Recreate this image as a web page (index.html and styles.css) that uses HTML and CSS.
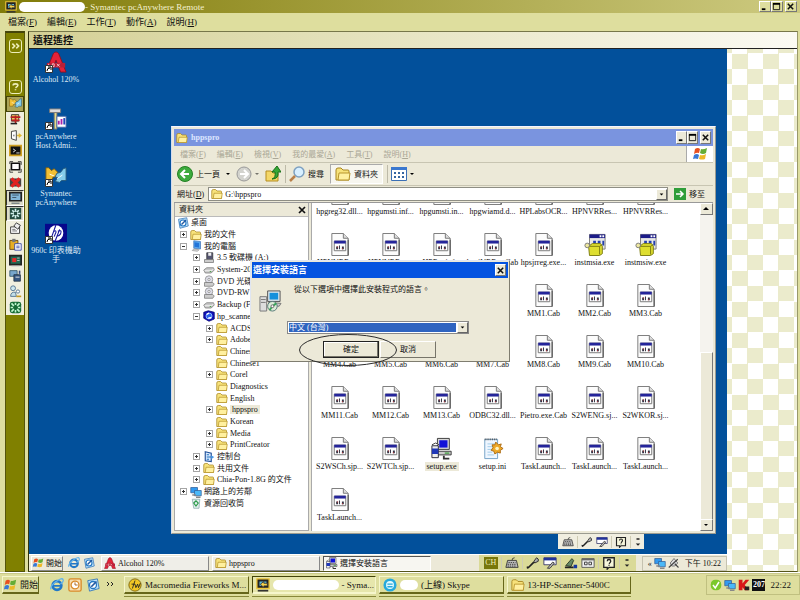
FILE: index.html
```html
<!DOCTYPE html>
<html lang="zh-Hant">
<head>
<meta charset="utf-8">
<title>Symantec pcAnywhere Remote</title>
<link rel="stylesheet" href="styles.css">
</head>
<body>
<svg class="defs" aria-hidden="true">
  <symbol id="folder" viewBox="0 0 16 16"><path d="M1 4q0-2 2-2h3l2 2h5q1 0 1 1v9H1z" fill="#f7e27a" stroke="#a88520"/><path d="M3 14l1-7h11l-1 7z" fill="#fff0a0" stroke="#b8952c"/></symbol>
  <symbol id="file" viewBox="0 0 20 24"><path d="M1.500.5h12l5 5v18h-17z" fill="#fcfcfc" stroke="#777"/><path d="M13.500.5v5h5" fill="#ddd" stroke="#777"/><path d="M18.500 7v16.500" stroke="#444"/><path d="M4 8.500h12v10H4z" fill="#fff" stroke="#777"/><path d="M4 8h12v3H4z" fill="#24249a"/><path d="M6 14h2v3H6zM9 13h1v4H9zM12 14h2v3h-2z" fill="#334"/><path d="M7 14h1v1H7zM12 16h1v1h-1z" fill="#c33"/></symbol>
  <symbol id="msi" viewBox="0 0 24 24"><path d="M6 1h17v16H6z" fill="#e8e8e8" stroke="#777"/><path d="M6 1h17v4H6z" fill="#1c1c88"/><path d="M17 2h2v2h-2zM20 2h2v2h-2z" fill="#fff"/><path d="M10 8h3v3h-3zM15 8h3v3h-3zM20 8h2v5h-2z" fill="#2440b0"/><path d="M5 14l4-3h9l2 3v8l-3 2H6z" fill="#dede30" stroke="#77770c"/><path d="M5 14h12v9" fill="none" stroke="#77770c"/><path d="M17 14l3-2" stroke="#77770c"/><circle cx="3.500" cy="13" r="2.500" fill="#eee8a0" stroke="#777"/></symbol>
  <symbol id="setup" viewBox="0 0 24 24"><path d="M7 1h13v12H7z" fill="#d8d8d8" stroke="#333"/><path d="M9 3h9v8H9z" fill="#1212d8"/><path d="M5 15h17v4H5z" fill="#ccc" stroke="#333"/><path d="M15 17h5" stroke="#080"/><path d="M1 9h7v13H1z" fill="#eee" stroke="#223"/><path d="M1 12h7v6H1z" fill="#2038b8"/><path d="M1 8l4-2 4 2" fill="#fff" stroke="#333"/><path d="M14 20v3h6" fill="none" stroke="#333" stroke-width="2"/></symbol>
  <symbol id="ini" viewBox="0 0 24 24"><path d="M3 2h14v21H3z" fill="#eef6ff" stroke="#6c9cc4"/><path d="M3 2h14" stroke="#555" stroke-width="2" stroke-dasharray="1 1"/><path d="M6 7h8M6 10h7M6 13h5M6 16h5M6 19h7" stroke="#9cc8e8"/><path d="M15 5l3 3 3-1-1 3 3 2-3 2v3l-3-1-3 2-1-3-3-1 2-3-1-3h3z" fill="#eea828" stroke="#a86810"/><circle cx="16.500" cy="12" r="2" fill="#fff4c0"/></symbol>
  <symbol id="ie" viewBox="0 0 16 16"><circle cx="8" cy="8.500" r="5" fill="none" stroke="#2178c8" stroke-width="3"/><path d="M4 9h9" stroke="#2178c8" stroke-width="2"/><path d="M1 13Q0 9 7 4t8-2q1 2-3 5" fill="none" stroke="#65b4ea" stroke-width="1.500"/></symbol>
  <symbol id="desk" viewBox="0 0 16 16"><path d="M2 3l11-2 2 11-11 3z" fill="#bfe2fa" stroke="#3477b8"/><circle cx="8" cy="8" r="4" fill="#fff" stroke="#2277c4" stroke-width="1.500"/><path d="M6 10l6-6" stroke="#2358a0" stroke-width="2"/></symbol>
  <symbol id="flag" viewBox="0 0 16 16"><path d="M3 3q3-2 5 0L7 7Q5 6 2 8z" fill="#e85020"/><path d="M9 3q2 1 6-1l-1 5q-3 2-6 0z" fill="#65ad35"/><path d="M2 9q3-2 5 0l-1 4q-3-1-5 0z" fill="#3978d5"/><path d="M8 9q3 1 6-1l-1 5q-3 1-6 0z" fill="#edb927"/></symbol>
  <symbol id="pc" viewBox="0 0 16 16"><path d="M5 1l9 1v10l-9-1z" fill="#58a8f0" stroke="#4878b8"/><path d="M6 3l6 1v6l-6-1z" fill="#2374d8"/><path d="M5 12l7 1-2 2-7-1z" fill="#ddd" stroke="#999"/></symbol>
  <symbol id="net" viewBox="0 0 16 16"><path d="M1 2h9v7H1z" fill="#329af0" stroke="#356098"/><path d="M6 6h9v7H6z" fill="#4ab8f8" stroke="#356098"/><path d="M3 12h5M8 15h6" stroke="#888" stroke-width="2"/></symbol>
  <symbol id="disk" viewBox="0 0 16 16"><path d="M1 8l4-3h9l1 3-4 4H3z" fill="#c8c8c8" stroke="#777"/><path d="M2 9h9l3-2" fill="none" stroke="#fff"/><path d="M9 10h2" stroke="#292"/></symbol>
  <symbol id="cd" viewBox="0 0 16 16"><circle cx="8" cy="6" r="5" fill="#dedee8" stroke="#888"/><circle cx="8" cy="6" r="1.500" fill="#fff" stroke="#888"/><path d="M2 10h11l2 2-2 3H2z" fill="#ccc" stroke="#777"/></symbol>
  <symbol id="floppy" viewBox="0 0 16 16"><path d="M5 1h8v9H5z" fill="#565670" stroke="#333"/><path d="M7 1h4v4H7z" fill="#eee"/><path d="M2 10h12v4H2z" fill="#ccc" stroke="#777"/></symbol>
  <symbol id="hpdrive" viewBox="0 0 16 16"><path d="M1 3l6-2 8 2v9l-7 3-7-4z" fill="#1010b8" stroke="#000070"/><circle cx="8" cy="8" r="4" fill="#2a60ee" stroke="#a8d8ff"/><path d="M5 6l3-2M7 11l4-1" stroke="#fff" stroke-width="2"/></symbol>
  <symbol id="panel" viewBox="0 0 16 16"><path d="M3 1l8 2v11l-8-1z" fill="#d8eaff" stroke="#205098" stroke-width="1.500"/><path d="M5 5h3M5 8h8M5 11h3" stroke="#2370bd" stroke-width="1.500"/><path d="M11 6l4 2-4 3" fill="#4b9be8"/></symbol>
  <symbol id="bin" viewBox="0 0 16 16"><path d="M3 3h10l-1 12H5z" fill="#e3efef" stroke="#8aa"/><path d="M5 8l3-3 3 3-3 4z" fill="none" stroke="#2a9a48" stroke-width="1.500"/></symbol>
  <symbol id="alcohol" viewBox="0 0 24 24"><path d="M1 23L9 3q3-4 6 0l8 20h-6l-5-13-5 13z" fill="#e32238" stroke="#8e1020"/><path d="M2 13h20v5H2z" fill="#b82038"/><path d="M4 14v3M8 14h2v3H8zM13 14l3 3m0-3l-3 3" stroke="#ffc8c8" fill="none"/></symbol>
  <symbol id="shortcut" viewBox="0 0 8 8"><path d="M.500.500h7v7h-7z" fill="#fff" stroke="#333"/><path d="M2 6q0-3 3-3M3 2h3v3" fill="none" stroke="#000"/></symbol>
  <symbol id="host" viewBox="0 0 24 24"><path d="M5 1h12v4H5z" fill="#ddd" stroke="#777"/><path d="M10 5h3v18h-3z" fill="#e6dc88" stroke="#777"/><path d="M13 9h10v12H13z" fill="#fff" stroke="#46a"/><path d="M15 18v-4M18 18v-6" stroke="#a2a" stroke-width="2"/><path d="M21 18v-7" stroke="#24b" stroke-width="2"/></symbol>
  <symbol id="hands" viewBox="0 0 24 24"><path d="M1 3h3l3 3 3-2 4 4-2 5H9l-2 4H1z" fill="#f2c034" stroke="#795b10"/><path d="M23 3l-3 1-3 4-4 1-2 4 3 1-3 4 5 1 2-2h5z" fill="#84cdea" stroke="#275878"/><path d="M5 10l5 2M13 15l6-4" stroke="#fff"/></symbol>
  <symbol id="hp" viewBox="0 0 24 20"><path d="M0 0h24v20H0z" fill="#07078c"/><ellipse cx="12" cy="10" rx="8" ry="8.500" fill="#fff"/><path d="M12 1L7 15M9 9q3-3 3 0l-2 5M16 6l-5 13M14 8q5-2 3 3-2 3-4 2" fill="none" stroke="#17179c" stroke-width="1.200"/></symbol>
  <symbol id="remote" viewBox="0 0 16 16"><path d="M1 1h14v11H1z" fill="#222" stroke="#eec63a" stroke-width="1.500"/><path d="M4 4h8v5H4z" fill="#5fb9d8"/><path d="M5 7l4-3v2h4v3H9v2z" fill="#f8d34b" stroke="#333"/><path d="M2 14.500h12" stroke="#333" stroke-width="2"/></symbol>
  <symbol id="kbd" viewBox="0 0 16 16"><path d="M8 5q0-3 3-3" fill="none" stroke="#333"/><path d="M3 5h10l2 8H1z" fill="#bbb" stroke="#333"/><path d="M4 7.500h8M3 9.500h10M3 11.500h10" stroke="#333" stroke-dasharray="1.500 1"/></symbol>
  <symbol id="mic" viewBox="0 0 16 16"><path d="M9 6l3-4q3 1 2 4l-4 2z" fill="#aaa" stroke="#222"/><path d="M9 7l-5 5q-3 3-2 0" fill="none" stroke="#222" stroke-width="2"/></symbol>
  <symbol id="plug" viewBox="0 0 16 16"><path d="M3 8l5-6 5 6-4 4H5z" fill="#ddd" stroke="#555"/><path d="M1 14L13 3M9 9l5 5" stroke="#444" stroke-width="1.500"/></symbol>
  <symbol id="tool" viewBox="0 0 16 16"><path d="M1 2h14v8H1z" fill="#fff" stroke="#336"/><path d="M1 2h14v3H1z" fill="#22329c"/><path d="M5 14l6-7 2 1-5 6z" fill="#bbb" stroke="#333"/></symbol>
  <symbol id="help" viewBox="0 0 16 16"><path d="M2 2h12v11H8l-2 2v-2H2z" fill="#f7f7dc" stroke="#222" stroke-width="1.500"/><path d="M6 6q0-2 2-2t2 2q0 1-2 3M8 10v1" fill="none" stroke="#222" stroke-width="1.500"/></symbol>
  <symbol id="pen" viewBox="0 0 16 16"><path d="M2 11l7-8 2 2-3 7z" fill="#686" stroke="#232"/><path d="M1 13h10" stroke="#222" stroke-width="2"/><path d="M11 10h4v4h-4z" fill="#1638a0"/></symbol>
  <symbol id="pad" viewBox="0 0 16 16"><path d="M1 3h14v10H1z" fill="#eee" stroke="#555"/><path d="M1 4h14" stroke="#666" stroke-width="2"/><path d="M4 7h3v3H4zM9 7h3v3H9z" fill="none" stroke="#333"/></symbol>
  <symbol id="dots" viewBox="0 0 8 16"><path d="M2 3h4v2H2zM1 10h6l-3 3z" fill="#222"/></symbol>
  <symbol id="min" viewBox="0 0 10 10"><path d="M2 7h4v2H2z"/></symbol>
  <symbol id="max" viewBox="0 0 10 10"><path d="M1.500 2h7v6.500h-7z" fill="none" stroke="#111"/><path d="M1 1h8v2H1z"/></symbol>
  <symbol id="close" viewBox="0 0 10 10"><path d="M2 2l6 6M8 2L2 8" stroke="#111" stroke-width="1.700"/></symbol>
  <symbol id="down" viewBox="0 0 10 10"><path d="M3 4h4L5 6z"/></symbol>
  <symbol id="up" viewBox="0 0 10 10"><path d="M2 6h6L5 3z"/></symbol>
</svg>

<header class="titlebar">
  <svg class="i12"><use href="#remote"/></svg>
  <span class="masked masked-title"></span>
  <h1>- Symantec pcAnywhere Remote</h1>
  <div class="controls">
    <button aria-label="最小化"><svg><use href="#min"/></svg></button><button aria-label="還原"><svg><use href="#max"/></svg></button><button class="apart" aria-label="關閉"><svg><use href="#close"/></svg></button>
  </div>
</header>
<nav class="menubar">
  <button>檔案(<u>F</u>)</button><button>編輯(<u>E</u>)</button><button>工作(<u>T</u>)</button><button>動作(<u>A</u>)</button><button>說明(<u>H</u>)</button>
</nav>

<main class="session">
  <aside class="rail">
    <button class="rail-btn" aria-label="展開"><svg viewBox="0 0 14 14"><path d="M3 4l3 3-3 3M8 4l3 3-3 3"/></svg></button>
    <button class="rail-btn rail-help" aria-label="說明"><svg viewBox="0 0 14 14"><path d="M4 5q0-2 3-2t3 2q0 1-3 3M7 10v1"/></svg></button>
    <div class="palette">
      <button class="khaki" aria-label="連線"><svg viewBox="0 0 24 24"><use href="#hands"/></svg></button>
      <button aria-label="傳輸"><svg viewBox="0 0 16 16"><path d="M3 2h9v8H3z" fill="#e8c860" stroke="#222"/><path d="M2 5h12M8 3v10M3 9h10" stroke="#b82020" stroke-width="2"/><path d="M2 13h8" stroke="#222" stroke-width="2"/></svg></button>
      <button aria-label="離開"><svg viewBox="0 0 16 16"><path d="M3 3l6-1v12l-6-2z" fill="#fff" stroke="#222"/><path d="M6 7v2" stroke="#222"/><path d="M10 7h2V5l4 3-4 3V9h-2z" fill="#e2b830"/></svg></button>
      <button aria-label="命令列"><svg viewBox="0 0 16 16"><path d="M1 2h14v12H1z" fill="#111" stroke="#d0a020" stroke-width="2"/><path d="M5 6l3 2-3 2M9 11h4" fill="none" stroke="#fff"/></svg></button>
      <button aria-label="全螢幕"><svg viewBox="0 0 16 16"><path d="M3 4h10v8H3z" fill="#fff" stroke="#111" stroke-width="2"/><path d="M1 5V2h4M11 2h4v4M15 11v4h-4M5 15H1v-4" fill="none" stroke="#222"/></svg></button>
      <button aria-label="中斷"><svg viewBox="0 0 16 16"><path d="M1 3h14v10H1z" fill="#444"/><path d="M3 3l10 10M13 3L3 13" stroke="#e02020" stroke-width="4"/></svg></button>
      <button class="picked" aria-label="檢視"><svg viewBox="0 0 16 16"><path d="M1 2h14v10H1z" fill="#82b6d8" stroke="#222" stroke-width="2"/><path d="M4 5h8M4 8h5M3 15h10" stroke="#345"/></svg></button>
      <button class="picked" aria-label="縮放"><svg viewBox="0 0 16 16"><path d="M1 1h14v14H1z" fill="#234b3d"/><path d="M8 2v12M2 8h12M4 4l8 8M12 4l-8 8" stroke="#d5f3ee" stroke-width="2"/><path d="M6 6h4v4H6z" fill="#234b3d"/></svg></button>
      <button aria-label="內容"><svg viewBox="0 0 16 16"><path d="M2 6h11v8H2z" fill="#fff" stroke="#222"/><path d="M9 1l5 3-3 5-5-4z" fill="#eee" stroke="#222"/><path d="M4 9h4M4 11h6" stroke="#555"/></svg></button>
      <button aria-label="剪貼簿"><svg viewBox="0 0 16 16"><path d="M1 3h10v11H1z" fill="#e6ad25" stroke="#5d3b05"/><path d="M4 1h4v4H4z" fill="#777"/><path d="M7 7h8v8H7z" fill="#fff" stroke="#2838a0"/><path d="M9 10h4M9 12h4" stroke="#2838a0"/></svg></button>
      <button aria-label="記錄"><svg viewBox="0 0 16 16"><path d="M1 2h14v11H1z" fill="#226852" stroke="#222" stroke-width="2"/><path d="M4 5h5v5H4z" fill="#e62929"/><path d="M10 5h3M10 8h3M3 15h10" stroke="#ccc"/></svg></button>
      <button aria-label="儲存"><svg viewBox="0 0 16 16"><path d="M1 2h9v7H1z" fill="#78a6cc" stroke="#356"/><path d="M6 7h8v8H6z" fill="#355682" stroke="#234"/><path d="M8 10h5" stroke="#fff"/><path d="M13 2v4" stroke="#347" stroke-width="2"/></svg></button>
      <button aria-label="交談"><svg viewBox="0 0 16 16"><circle cx="5" cy="4" r="3" fill="#cfe8ee" stroke="#468"/><path d="M2 14q0-6 6-5l1 5z" fill="#c4dfe8" stroke="#468"/><circle cx="11" cy="8" r="2" fill="#fff" stroke="#468"/><path d="M9 14h6" stroke="#c59a20" stroke-width="2"/></svg></button>
      <button aria-label="重新整理"><svg viewBox="0 0 16 16"><rect x="1" y="1" width="14" height="14" rx="3" fill="#176b36"/><path d="M3 3l3 3M13 3l-3 3M3 13l3-3M13 13l-3-3M8 2v3M8 11v3M2 8h3M11 8h3" stroke="#bff4ce" stroke-width="2"/></svg></button>
    </div>
  </aside>

  <section class="viewer">
    <h2 class="viewer-title">遠程遙控</h2>
    <div class="viewport">
      <div class="remote">
        <div class="desktop">
          <div class="shortcuts">
            <a href="#"><span class="lnk"><svg><use href="#alcohol"/></svg><svg class="arrow"><use href="#shortcut"/></svg></span>Alcohol 120%</a>
            <a href="#"><span class="lnk"><svg><use href="#host"/></svg><svg class="arrow"><use href="#shortcut"/></svg></span>pcAnywhere<br>Host Admi...</a>
            <a href="#"><span class="lnk"><svg><use href="#hands"/></svg><svg class="arrow"><use href="#shortcut"/></svg></span>Symantec<br>pcAnywhere</a>
            <a href="#"><span class="lnk"><svg><use href="#hp"/></svg><svg class="arrow"><use href="#shortcut"/></svg></span>960c 印表機助<br>手</a>
          </div>

          <section class="explorer">
            <header class="ex-title">
              <svg class="i12"><use href="#folder"/></svg><h3>hppspro</h3>
              <div class="controls">
                <button aria-label="最小化"><svg><use href="#min"/></svg></button><button aria-label="最大化"><svg><use href="#max"/></svg></button><button class="apart" aria-label="關閉"><svg><use href="#close"/></svg></button>
              </div>
            </header>
            <nav class="ex-menu">
              <button>檔案(<u>F</u>)</button><button>編輯(<u>E</u>)</button><button>檢視(<u>V</u>)</button><button>我的最愛(<u>A</u>)</button><button>工具(<u>T</u>)</button><button>說明(<u>H</u>)</button>
              <span class="throbber"><svg class="i16"><use href="#flag"/></svg></span>
            </nav>
            <div class="ex-tools">
              <button><svg class="i16" viewBox="0 0 16 16"><circle cx="8" cy="8" r="7.500" fill="#3caa3c" stroke="#248024"/><path d="M8 4L4 8l4 4M4 8h8" fill="none" stroke="#fff" stroke-width="2"/></svg>上一頁<svg class="i10"><use href="#down"/></svg></button>
              <button class="tight"><svg class="i16" viewBox="0 0 16 16"><circle cx="8" cy="8" r="7" fill="#d3d3ce" stroke="#999"/><path d="M8 4l4 4-4 4M12 8H4" fill="none" stroke="#fff" stroke-width="2"/></svg><svg class="i10 dim"><use href="#down"/></svg></button>
              <button aria-label="上一層"><svg class="i16" viewBox="0 0 16 16"><path d="M1 5h5l2 2h5v8H1z" fill="#f4d768" stroke="#b58d20"/><path d="M7 13q4-1 3-7H7l5-6 4 6h-3q1 7-6 7" fill="#37a737" stroke="#187018"/></svg></button>
              <i class="sep"></i>
              <button><svg class="i16" viewBox="0 0 16 16"><circle cx="10" cy="6" r="5" fill="#d8efff" stroke="#7da0c0" stroke-width="1.500"/><path d="M6 10l-5 5" stroke="#b9804a" stroke-width="2.500"/></svg>搜尋</button>
              <button class="on"><svg class="i16"><use href="#folder"/></svg>資料夾</button>
              <i class="sep"></i>
              <button class="tight" aria-label="檢視"><svg class="i16" viewBox="0 0 16 16"><path d="M.500 1.500h15v13H.500z" fill="#fff" stroke="#3b6fb5"/><path d="M0 1h16v3H0z" fill="#3b78cf"/><path d="M3 6h2v2H3zM7 6h2v2H7zM11 6h2v2h-2zM3 10h2v2H3zM7 10h2v2H7zM11 10h2v2h-2z" fill="#3566a0"/></svg><svg class="i10"><use href="#down"/></svg></button>
            </div>
            <div class="ex-address">
              <label for="addr">網址(<u>D</u>)</label>
              <div class="addr-box"><svg class="i12"><use href="#folder"/></svg><input id="addr" value="G:\hppspro"><button class="drop" aria-label="展開網址"><svg class="i10"><use href="#down"/></svg></button></div>
              <button class="go"><svg class="i12" viewBox="0 0 12 12"><path d="M0 0h12v12H0z" fill="#2f9e3a"/><path d="M2 6h7M6 3l3 3-3 3" fill="none" stroke="#fff" stroke-width="1.500"/></svg>移至</button>
            </div>
            <div class="ex-body">
              <aside class="tree-pane">
                <header>資料夾<button aria-label="關閉資料夾"><svg class="i10"><use href="#close"/></svg></button></header>
                <ul class="tree">
                  <li class="l0"><svg class="i12"><use href="#desk"/></svg>桌面</li>
                  <li class="l1"><b class="plus"></b><svg class="i12"><use href="#folder"/></svg>我的文件</li>
                  <li class="l1"><b class="minus"></b><svg class="i12"><use href="#pc"/></svg>我的電腦</li>
                  <li class="l2"><b class="plus"></b><svg class="i12"><use href="#floppy"/></svg>3.5 軟碟機 (A:)</li>
                  <li class="l2"><b class="plus"></b><svg class="i12"><use href="#disk"/></svg>System-20</li>
                  <li class="l2"><b class="plus"></b><svg class="i12"><use href="#cd"/></svg>DVD 光碟</li>
                  <li class="l2"><b class="plus"></b><svg class="i12"><use href="#cd"/></svg>DVD-RW</li>
                  <li class="l2"><b class="plus"></b><svg class="i12"><use href="#disk"/></svg>Backup (F:)</li>
                  <li class="l2"><b class="minus"></b><svg class="i12"><use href="#hpdrive"/></svg>hp_scanner</li>
                  <li class="l3"><b class="plus"></b><svg class="i12"><use href="#folder"/></svg>ACDSee</li>
                  <li class="l3"><b class="plus"></b><svg class="i12"><use href="#folder"/></svg>Adobe</li>
                  <li class="l3"><b></b><svg class="i12"><use href="#folder"/></svg>Chinese</li>
                  <li class="l3"><b></b><svg class="i12"><use href="#folder"/></svg>Chinese1</li>
                  <li class="l3"><b class="plus"></b><svg class="i12"><use href="#folder"/></svg>Corel</li>
                  <li class="l3"><b></b><svg class="i12"><use href="#folder"/></svg>Diagnostics</li>
                  <li class="l3"><b></b><svg class="i12"><use href="#folder"/></svg>English</li>
                  <li class="l3"><b class="plus"></b><svg class="i12"><use href="#folder"/></svg><mark>hppspro</mark></li>
                  <li class="l3"><b></b><svg class="i12"><use href="#folder"/></svg>Korean</li>
                  <li class="l3"><b class="plus"></b><svg class="i12"><use href="#folder"/></svg>Media</li>
                  <li class="l3"><b class="plus"></b><svg class="i12"><use href="#folder"/></svg>PrintCreator</li>
                  <li class="l2"><b class="plus"></b><svg class="i12"><use href="#panel"/></svg>控制台</li>
                  <li class="l2"><b class="plus"></b><svg class="i12"><use href="#folder"/></svg>共用文件</li>
                  <li class="l2"><b class="plus"></b><svg class="i12"><use href="#folder"/></svg>Chia-Pon-1.8G 的文件</li>
                  <li class="l1"><b class="plus"></b><svg class="i12"><use href="#net"/></svg>網路上的芳鄰</li>
                  <li class="l1"><b></b><svg class="i12"><use href="#bin"/></svg>資源回收筒</li>
                </ul>
              </aside>
              <div class="files-pane">
                <ul class="files">
                  <li><svg><use href="#file"/></svg>hpgreg32.dll...</li>
                  <li><svg><use href="#file"/></svg>hpgumsti.inf...</li>
                  <li><svg><use href="#file"/></svg>hpgumsti.in...</li>
                  <li><svg><use href="#file"/></svg>hpgwiamd.d...</li>
                  <li><svg><use href="#file"/></svg>HPLabsOCR...</li>
                  <li><svg><use href="#file"/></svg>HPNVRRes...</li>
                  <li><svg><use href="#file"/></svg>HPNVRRes...</li>
                  <li><svg><use href="#file"/></svg>HPNVRRes...</li>
                  <li><svg><use href="#file"/></svg>HPNVRRes...</li>
                  <li><svg><use href="#file"/></svg>HPReginf...</li>
                  <li><svg><use href="#file"/></svg>hpsjVRRes.Cab</li>
                  <li><svg><use href="#file"/></svg>hpsjrreg.exe...</li>
                  <li><svg><use href="#msi"/></svg>instmsia.exe</li>
                  <li><svg><use href="#msi"/></svg>instmsiw.exe</li>
                  <li class="new-row"><svg><use href="#file"/></svg>MM1.Cab</li>
                  <li><svg><use href="#file"/></svg>MM2.Cab</li>
                  <li><svg><use href="#file"/></svg>MM3.Cab</li>
                  <li><svg><use href="#file"/></svg>MM4.Cab</li>
                  <li><svg><use href="#file"/></svg>MM5.Cab</li>
                  <li><svg><use href="#file"/></svg>MM6.Cab</li>
                  <li><svg><use href="#file"/></svg>MM7.Cab</li>
                  <li><svg><use href="#file"/></svg>MM8.Cab</li>
                  <li><svg><use href="#file"/></svg>MM9.Cab</li>
                  <li><svg><use href="#file"/></svg>MM10.Cab</li>
                  <li><svg><use href="#file"/></svg>MM11.Cab</li>
                  <li><svg><use href="#file"/></svg>MM12.Cab</li>
                  <li><svg><use href="#file"/></svg>MM13.Cab</li>
                  <li><svg><use href="#file"/></svg>ODBC32.dll...</li>
                  <li><svg><use href="#file"/></svg>Pietro.exe.Cab</li>
                  <li><svg><use href="#file"/></svg>S2WENG.sj...</li>
                  <li><svg><use href="#file"/></svg>S2WKOR.sj...</li>
                  <li><svg><use href="#file"/></svg>S2WSCh.sjp...</li>
                  <li><svg><use href="#file"/></svg>S2WTCh.sjp...</li>
                  <li><svg><use href="#setup"/></svg><mark>setup.exe</mark></li>
                  <li><svg><use href="#ini"/></svg>setup.ini</li>
                  <li><svg><use href="#file"/></svg>TaskLaunch...</li>
                  <li><svg><use href="#file"/></svg>TaskLaunch...</li>
                  <li><svg><use href="#file"/></svg>TaskLaunch...</li>
                  <li><svg><use href="#file"/></svg>TaskLaunch...</li>
                </ul>
              </div>
              <div class="scroll">
                <button aria-label="向上捲動"><svg class="i10"><use href="#up"/></svg></button>
                <div class="track"><div class="thumb"></div></div>
                <button aria-label="向下捲動"><svg class="i10"><use href="#down"/></svg></button>
              </div>
            </div>
          </section>

          <div class="langfloat">
            <svg class="i12"><use href="#kbd"/></svg><i></i><svg class="i12"><use href="#mic"/></svg><svg class="i12"><use href="#tool"/></svg><i></i><svg class="i12"><use href="#help"/></svg><i></i><svg class="dots"><use href="#dots"/></svg>
          </div>

          <section class="dialog" role="dialog" aria-labelledby="dlg-title">
            <header><h3 id="dlg-title">選擇安裝語言</h3><button aria-label="關閉"><svg class="i10"><use href="#close"/></svg></button></header>
            <div class="dlg-body">
              <svg class="dlg-icon" viewBox="0 0 24 24"><path d="M1 8h7v15H1z" fill="#ddd" stroke="#777"/><path d="M2 11h5M2 14h5" stroke="#777"/><path d="M9 2h13v11H9z" fill="#d8e4ec" stroke="#555"/><path d="M11 4h9v7h-9z" fill="#1590dc"/><path d="M10 14l13 1-2 3-11-1z" fill="#ccc" stroke="#777"/><circle cx="14" cy="18" r="5" fill="#dcecd8" stroke="#577"/><path d="M14 18l4-3M14 18l-3 4" stroke="#3aa35a" stroke-width="2"/><circle cx="14" cy="18" r="1.500" fill="#fff" stroke="#666"/></svg>
              <label for="lang">從以下選項中選擇此安裝程式的語言。</label>
              <div class="combo"><select id="lang"><option>中文 (台灣)</option></select><span class="combo-arrow"><svg class="i10"><use href="#down"/></svg></span></div>
              <div class="dlg-actions"><button class="default">確定</button><button>取消</button></div>
            </div>
            <svg class="circle" viewBox="0 0 100 34"><ellipse cx="50" cy="17" rx="48.500" ry="15.500"/></svg>
          </section>
        </div>

        <footer class="rtaskbar">
          <button class="rstart"><svg class="i12"><use href="#flag"/></svg>開始</button>
          <div class="rquick"><svg class="i12"><use href="#ie"/></svg><svg class="i12"><use href="#desk"/></svg></div>
          <div class="rtasks">
            <button><svg class="i12"><use href="#alcohol" /></svg>Alcohol 120%</button>
            <button><svg class="i12"><use href="#folder"/></svg>hppspro</button>
            <button class="active"><svg class="i12"><use href="#setup"/></svg>選擇安裝語言</button>
          </div>
          <div class="rlang"><b>CH</b><i></i><svg class="i14"><use href="#kbd"/></svg><i></i><svg class="i14"><use href="#mic"/></svg><svg class="i14"><use href="#tool"/></svg><i></i><svg class="i14"><use href="#pen"/></svg><svg class="i14"><use href="#pad"/></svg><i></i><svg class="i14"><use href="#help"/></svg><i></i><svg class="dots"><use href="#dots"/></svg></div>
          <div class="rtray"><span>«</span><svg class="i12"><use href="#net"/></svg><svg class="i12"><use href="#plug"/></svg><time>下午 10:22</time></div>
        </footer>
      </div>
      <div class="checker"></div>
    </div>
  </section>
</main>

<footer class="taskbar">
  <button class="start"><svg class="i14"><use href="#flag"/></svg>開始</button>
  <div class="quick">
    <svg class="i14"><use href="#ie"/></svg>
    <svg class="i14" viewBox="0 0 16 16"><rect x="1" y="1" width="14" height="14" rx="2" fill="#f8dfb0" stroke="#d88a28" stroke-width="1.500"/><circle cx="8" cy="8" r="4.500" fill="#fff" stroke="#d88a28" stroke-width="1.500"/><path d="M8 5v3h3" fill="none" stroke="#a35d10"/></svg>
    <svg class="i14"><use href="#desk"/></svg>
    <svg class="more" viewBox="0 0 8 8"><path d="M1 1l2 2-2 2M5 1l2 2-2 2"/></svg>
  </div>
  <div class="tasks">
    <button><svg class="i14" viewBox="0 0 16 16"><circle cx="8" cy="8" r="7" fill="#f1c624" stroke="#79600a"/><path d="M5 12l3-9M4 7h4M8 7l1 4 2-4 1 4 2-5" fill="none" stroke="#222"/></svg><span>Macromedia Fireworks M...</span></button>
    <button class="active"><svg class="i14"><use href="#remote"/></svg><span class="masked masked-task"></span><span>- Syma...</span></button>
    <button><svg class="i14" viewBox="0 0 16 16"><circle cx="8" cy="8" r="6" fill="#e4faff" stroke="#26a9dc" stroke-width="3"/><path d="M5 7h6M5 10h6" stroke="#26a9dc" stroke-width="1.500"/></svg><span class="masked masked-name"></span><span>(上線) Skype</span></button>
    <button><svg class="i14"><use href="#folder"/></svg><span>13-HP-Scanner-5400C</span></button>
  </div>
  <div class="tray">
    <svg class="i12" viewBox="0 0 16 16"><rect x="1" y="1" width="14" height="14" rx="6" fill="#7cc82c"/><path d="M4 8l3 4 5-8" fill="none" stroke="#fff" stroke-width="2"/></svg>
    <svg class="i12"><use href="#net"/></svg>
    <svg class="i12" viewBox="0 0 16 16"><path d="M1 1h5v5l4-5h5l-6 7 5 7H9L6 11v4H1z" fill="#d81818"/><path d="M9 10h6v5H9z" fill="#222"/></svg>
    <b>207</b>
    <time>22:22</time>
  </div>
</footer>
</body>
</html>
```
FILE: styles.css
```css
* { box-sizing: border-box; }

:root {
  --khaki: #dede9e;
  --olive: #808000;
  --face: #ece9d8;
  --blue: #02509b;
  --local: 9px;
  --small: 8px;
}

body {
  margin: 0;
  min-height: 100vh;
  display: flex;
  flex-direction: column;
  overflow: hidden;
  background: var(--khaki);
  color: #111;
  font: var(--local)/12px "Liberation Serif", "Noto Sans CJK TC", serif;
}

h1, h2, h3, ul { margin: 0; padding: 0; font-size: inherit; font-weight: normal; list-style: none; }
button, input, select { font: inherit; color: inherit; margin: 0; padding: 0; border: 0; background: none; white-space: nowrap; }
a { color: inherit; text-decoration: none; }
svg { display: block; flex: none; }
mark { background: var(--face); color: inherit; padding: 0 2px; }

.defs { position: absolute; width: 0; height: 0; }
.i10 { width: 10px; height: 10px; }
.i12 { width: 12px; height: 12px; }
.i14 { width: 14px; height: 14px; }
.i16 { width: 16px; height: 16px; }
.dots { width: 8px; height: 12px; }

.masked { background: #fff; border-radius: 6px; }
.masked-title { width: 66px; height: 10px; }
.masked-task { width: 66px; height: 10px; }
.masked-name { width: 18px; height: 10px; }

/* Local window frame */
.titlebar {
  display: flex;
  align-items: center;
  height: 13px;
  padding: 0 3px 0 5px;
  background: linear-gradient(90deg, #817b08, #cdca80);
  color: #f4f1cf;
}
.titlebar .masked { margin-left: 2px; }
.controls { display: flex; margin-left: auto; }
.controls button, .dialog header button {
  width: 11px;
  height: 11px;
  background: var(--face);
  border: 1px solid;
  border-color: #fff #777 #777 #fff;
}
.controls svg { width: 9px; height: 9px; }
.controls .apart { margin-left: 2px; }
.titlebar .controls button { width: 12px; background: var(--khaki); }

.menubar { display: flex; gap: 10px; height: 17px; padding: 2px 8px; }

.session { flex: 1; display: flex; min-height: 0; padding: 1px 2px 0 5px; border-bottom: 1px solid #fff; }

.rail {
  flex: 0 0 20px;
  display: flex;
  flex-direction: column;
  align-items: center;
  border: 1px solid #55550a;
  border-top: 2px solid #44440a;
  padding-top: 6px;
  background: var(--olive);
}
.rail-btn { width: 13px; height: 14px; border: 1px solid #eeeeba; border-radius: 3px; }
.rail-btn svg { width: 11px; height: 12px; fill: none; stroke: #eeeeba; stroke-width: 2; }
.rail-help { margin-top: 27px; }
.palette {
  display: grid;
  grid-auto-rows: 1fr;
  width: 18px;
  height: 219px;
  margin-top: 2px;
  background: #f1efdf;
}
.palette button { display: grid; place-items: center; min-height: 0; }
.palette svg { width: 13px; height: 13px; }
.palette .khaki { background: #aaa458; border: 1px solid #44440a; }
.palette .picked { background: #dcdcc8; border: 1px solid #555; border-color: #333 #fff #fff #333; }

.viewer {
  flex: 1;
  min-width: 0;
  display: flex;
  flex-direction: column;
  margin-left: 3px;
  border-left: 1px solid #33330a;
  border-top: 1px solid #77774a;
  border-right: 1px solid #99996a;
  border-bottom: 1px solid #55551a;
}
.viewer-title {
  height: 17px;
  padding: 3px 4px 1px;
  background: linear-gradient(90deg, #d4d094, #fbfaf3);
  border-bottom: 1px solid #222;
  font-size: 10px;
  font-weight: bold;
  line-height: 12px;
}
.viewport { flex: 1; display: flex; min-height: 0; }
.remote { flex: 1; display: flex; flex-direction: column; min-width: 0; font-size: var(--small); line-height: 9px; }
.checker {
  flex: 0 0 70px;
  background: conic-gradient(#ebebcc 25%, #fff 0 50%, #ebebcc 0 75%, #fff 0) 5px 20px / 31px 31px;
}

/* Remote desktop */
.desktop { position: relative; flex: 1; background: var(--blue); overflow: hidden; }
.shortcuts { display: grid; grid-auto-rows: 57px; width: 54px; padding-top: 2px; color: #dfeaf5; text-align: center; white-space: nowrap; }
.lnk { position: relative; display: block; width: 22px; height: 24px; margin: 0 auto; }
.lnk svg { width: 22px; height: 22px; }
.lnk .arrow { position: absolute; left: 0; bottom: 2px; width: 8px; height: 8px; }

.explorer {
  position: absolute;
  inset: 77px 11px 20px 142px;
  display: flex;
  flex-direction: column;
  padding: 2px;
  background: var(--face);
  border: 1px solid;
  border-color: #f4f4ff #9b9b90 #9b9b90 #d4dcf0;
}
.ex-title {
  display: flex;
  align-items: center;
  height: 17px;
  padding: 0 2px;
  gap: 3px;
  background: #7a94df;
  color: #dde6ff;
}
.ex-title h3 { font-weight: bold; }
.ex-title .controls button { height: 13px; }
.ex-menu { display: flex; align-items: center; gap: 11px; height: 17px; padding-left: 6px; border-bottom: 1px solid #c8c5b2; color: #aaa796; }
.throbber { display: grid; place-items: center; width: 27px; height: 16px; margin-left: auto; background: #fff; border-left: 1px solid #aaa; }
.ex-tools { display: flex; align-items: center; gap: 3px; height: 23px; padding-left: 3px; border-bottom: 1px solid #c8c5b2; }
.ex-tools button { display: flex; align-items: center; gap: 3px; height: 20px; }
.ex-tools .tight { gap: 0; }
.ex-tools .dim { opacity: .5; }
.ex-tools .on { margin-left: 3px; padding: 0 4px; background: #f7f6ef; border: 1px solid; border-color: #aaa #fff #fff #aaa; }
.sep { width: 1px; height: 18px; margin-left: 1px; background: #bdbaa8; }
.ex-address { display: flex; align-items: center; gap: 4px; height: 16px; padding: 0 8px 0 3px; }
.addr-box { flex: 1; display: flex; align-items: center; gap: 2px; height: 14px; padding-left: 2px; background: #fff; border: 1px solid #8e8e84; }
.addr-box input { flex: 1; min-width: 0; outline: 0; }
.drop { width: 11px; height: 11px; background: var(--face); border: 1px solid; border-color: #fff #666 #666 #fff; }
.drop svg { width: 9px; height: 9px; }
.go { display: flex; align-items: center; gap: 3px; margin-left: 2px; }

.ex-body { flex: 1; display: flex; min-height: 0; border-top: 1px solid #999; }
.tree-pane { flex: 0 0 135px; display: flex; flex-direction: column; background: #fff; border: 1px solid #aaa; border-top: 0; }
.tree-pane header { display: flex; align-items: center; justify-content: space-between; height: 14px; padding: 0 1px 0 4px; background: var(--face); border-bottom: 1px solid #bbb; }
.tree { flex: 1; display: flex; flex-direction: column; padding-bottom: 21px; white-space: nowrap; overflow: hidden; }
.tree li { flex: 1; display: flex; align-items: center; gap: 2px; min-height: 0; }
.tree .l0 { padding-left: 2px; }
.tree .l1 { padding-left: 4px; }
.tree .l2 { padding-left: 17px; }
.tree .l3 { padding-left: 30px; }
.tree b { width: 9px; height: 9px; }
.tree .plus, .tree .minus {
  width: 7px;
  height: 7px;
  margin: 0 1px;
  border: 1px solid #a5a5a5;
  background: linear-gradient(#333, #333) center / 3px 1px no-repeat;
}
.tree .plus { background: linear-gradient(#333, #333) center / 3px 1px no-repeat, linear-gradient(#333, #333) center / 1px 3px no-repeat; }

.files-pane { flex: 1; min-width: 0; margin-left: 2px; background: #fff; border-left: 1px solid #aaa; overflow: hidden; }
.files { display: grid; grid-template-columns: repeat(7, 51px); grid-auto-rows: 51px; margin-top: -21px; padding-left: 2px; }
.files li { display: flex; flex-direction: column; align-items: center; gap: 2px; white-space: nowrap; }
.files svg { width: 22px; height: 23px; }
.files .new-row { grid-column-start: 5; }

.scroll { display: flex; flex-direction: column; flex: 0 0 13px; background: #f5f3ee; }
.scroll button { height: 12px; background: var(--face); border: 1px solid; border-color: #fff #777 #777 #fff; }
.track { flex: 1; display: flex; flex-direction: column; justify-content: flex-end; }
.thumb { height: 55%; background: var(--face); border-left: 1px solid #fff; border-right: 1px solid #777; border-top: 1px solid #fff; }

.langfloat {
  position: absolute;
  right: 83px;
  bottom: 5px;
  display: flex;
  align-items: center;
  gap: 3px;
  height: 15px;
  padding: 0 2px 0 4px;
  background: #f0eee0;
}
.langfloat i, .rlang i { width: 1px; height: 12px; background: #cfccb4; }

.dialog {
  position: absolute;
  left: 221px;
  top: 211px;
  width: 260px;
  padding: 1px;
  background: var(--face);
  border: 1px solid;
  border-color: #e0e6f2 #7f7d70 #7f7d70 #e0e6f2;
}
.dialog header { display: flex; align-items: center; justify-content: space-between; height: 16px; padding: 0 2px 0 1px; background: #0453e0; color: #fff; }
.dialog header h3 { font-size: var(--local); font-weight: bold; }
.dialog header button { height: 12px; }
.dialog header svg { width: 9px; height: 9px; }
.dlg-body { display: grid; grid-template-columns: 28px 1fr; padding: 6px 39px 2px 7px; }
.dlg-icon { grid-row: 1 / 4; width: 23px; height: 25px; margin-top: 4px; }
.dlg-body label { height: 37px; margin-left: 7px; line-height: 11px; }
.combo { display: flex; height: 13px; border: 1px solid #888; background: #fff; }
.combo select { flex: 1; appearance: none; border: 1px solid #fff; background: #2f64c0; color: #fff; line-height: 9px; }
.combo-arrow { width: 11px; background: var(--face); border: 1px solid; border-color: #fff #666 #666 #fff; }
.combo-arrow svg { width: 9px; height: 9px; }
.dlg-actions { display: flex; gap: 1px; margin: 7px 0 0 36px; }
.dlg-actions button { width: 56px; height: 17px; background: var(--face); border: 1px solid; border-color: #fff #77756a #77756a #fff; }
.dlg-actions .default { border: 1px solid #222; box-shadow: inset -1px -1px #77756a, inset 1px 1px #fff; }
.circle { position: absolute; left: 47px; top: 72px; width: 100px; height: 34px; fill: none; stroke: #2c2c2c; pointer-events: none; }

.rtaskbar { display: flex; align-items: center; height: 17px; padding: 0 0 0 2px; background: var(--face); border-top: 1px solid #fff; }
.rtaskbar button { display: flex; align-items: center; gap: 2px; height: 15px; border: 1px solid; border-color: #fff #888 #888 #fff; }
.rstart { width: 32px; }
.rquick { display: flex; gap: 3px; width: 38px; padding-left: 5px; }
.rtasks { display: flex; gap: 3px; flex: 0 1 330px; }
.rtasks button { flex: 1; padding-left: 2px; background: #efeee8; }
.rtasks .active { background: #f7f6f1; border-color: #555 #fff #fff #555; }
.rlang { display: flex; align-items: center; gap: 3px; height: 100%; margin-left: auto; padding: 0 5px; background: #dada98; }
.rlang b { width: 14px; background: #77770a; color: #eeeebb; line-height: 12px; text-align: center; font-weight: normal; }
.rtray { display: flex; align-items: center; gap: 2px; height: 15px; margin-left: 6px; padding: 0 5px 0 5px; border: 1px solid #c5c2b0; }
.rtray time { margin-left: 3px; }

/* Local taskbar */
.taskbar { display: flex; align-items: center; height: 27px; padding: 0 0 4px 2px; border-top: 1px solid #c9c98a; }
.taskbar button { display: flex; align-items: center; gap: 3px; height: 18px; border: 1px solid; border-color: #f6f6cc #66661a #66661a #f6f6cc; border-bottom-width: 2px; }
.start { width: 37px; }
.quick { display: flex; align-items: center; gap: 4px; width: 84px; padding-left: 10px; margin-left: 1px; }
.more { width: 8px; height: 8px; margin-left: 2px; fill: none; stroke: #222; }
.tasks { display: flex; gap: 3px; flex: 0 1 507px; }
.tasks button { flex: 1 1 0; min-width: 0; padding-left: 3px; overflow: hidden; box-shadow: 0 2px 0 var(--khaki), 0 3px 0 #88883a; }
.tasks .active { border-color: #44440a #f6f6cc #f6f6cc #44440a; background: #e6e6ac; }
.tray { display: flex; align-items: center; gap: 2px; height: 20px; margin-left: auto; padding: 0 8px 0 3px; border: 1px solid #c0c080; }
.tray b { width: 13px; background: #111; color: #fff; font-size: var(--small); line-height: 12px; text-align: center; }
.tray time { margin-left: 3px; }
```
